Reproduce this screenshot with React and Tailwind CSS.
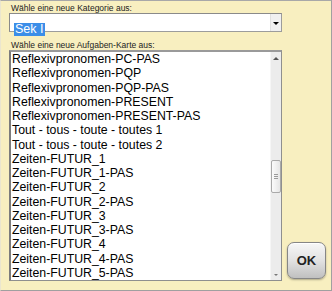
import React from "react";

const items = [
  "Reflexivpronomen-PC-PAS",
  "Reflexivpronomen-PQP",
  "Reflexivpronomen-PQP-PAS",
  "Reflexivpronomen-PRESENT",
  "Reflexivpronomen-PRESENT-PAS",
  "Tout - tous - toute - toutes 1",
  "Tout - tous - toute - toutes 2",
  "Zeiten-FUTUR_1",
  "Zeiten-FUTUR_1-PAS",
  "Zeiten-FUTUR_2",
  "Zeiten-FUTUR_2-PAS",
  "Zeiten-FUTUR_3",
  "Zeiten-FUTUR_3-PAS",
  "Zeiten-FUTUR_4",
  "Zeiten-FUTUR_4-PAS",
  "Zeiten-FUTUR_5-PAS",
];

export default function App() {
  return (
    <div
      className="w-[332px] h-[291px] bg-[#f8efc0] border-t border-r border-b border-l border-t-[#a8a8a8] border-r-[#a0a0a0] border-b-[#a0a0a0] border-l-[#ebe6cf] flex flex-col pl-[8px] pt-[2px] overflow-hidden"
      style={{ fontFamily: '"Liberation Sans", Arial, sans-serif' }}
    >
      <div className="text-[8.5px] leading-[10px] text-[#222] pl-[2px]">
        Wähle eine neue Kategorie aus:
      </div>
      <div className="w-[273px] h-[19px] border border-[#9c9c9c] border-t-[#8a8a8a] border-l-[#8a8a8a] bg-white flex">
        <div className="flex-1 pl-[4px] pt-[2px]">
          <span className="inline-block bg-[#3b8ee8] text-white text-[12.5px] leading-[13px] px-[1px]">
            Sek I
          </span>
        </div>
        <div className="w-[11px] bg-[#f0f0f0] border-l border-[#e0e0e0] flex items-center justify-center">
          <div className="w-0 h-0 border-l-[3px] border-r-[3px] border-t-[3px] border-l-transparent border-r-transparent border-t-black mt-[1px]" />
        </div>
      </div>
      <div className="text-[8.5px] leading-[10px] text-[#222] pl-[2px] mt-[8px]">
        Wähle eine neue Aufgaben-Karte aus:
      </div>
      <div className="flex items-end gap-[5px]">
        <div className="w-[273px] h-[231px] border border-[#8f8f8f] border-t-2 border-l-2 border-t-[#9a9a9a] border-l-[#7c7c7c] bg-white flex">
          <div className="flex-1 overflow-hidden pl-[1px]">
            {items.map((t) => (
              <div
                key={t}
                className="text-[12.3px] leading-[14.25px] text-black whitespace-nowrap"
              >
                {t}
              </div>
            ))}
          </div>
          <div className="w-[11px] bg-[#ececec] border-l border-[#f6f6f6] flex flex-col items-center">
            <div className="h-[10px] flex items-center justify-center">
              <div className="w-0 h-0 border-l-[3px] border-r-[3px] border-b-[3px] border-l-transparent border-r-transparent border-b-[#555] mt-[3px]" />
            </div>
            <div className="h-[98px]" />
            <div className="w-[10px] h-[33px] rounded-[2px] border border-[#a9a9a9] bg-gradient-to-r from-[#fbfbfb] to-[#e6e6e6] flex flex-col items-center justify-center gap-[1px]">
              <div className="w-[4px] h-px bg-[#9a9a9a]" />
              <div className="w-[4px] h-px bg-[#9a9a9a]" />
              <div className="w-[4px] h-px bg-[#9a9a9a]" />
            </div>
            <div className="flex-1" />
            <div className="h-[10px] flex items-center justify-center">
              <div className="w-0 h-0 border-l-[2px] border-r-[2px] border-t-[2px] border-l-transparent border-r-transparent border-t-[#777]" />
            </div>
          </div>
        </div>
        <div className="w-[39px] h-[37px] mb-[2px] rounded-[7px] border border-[#868686] bg-gradient-to-b from-[#f7f7f7] via-[#e2e2e2] to-[#c0c0c0] shadow-[inset_0_1px_0_#ffffff,0_1px_2px_rgba(0,0,0,0.3)] flex items-center justify-center">
          <span className="text-[13px] font-bold text-[#222]">OK</span>
        </div>
      </div>
    </div>
  );
}
